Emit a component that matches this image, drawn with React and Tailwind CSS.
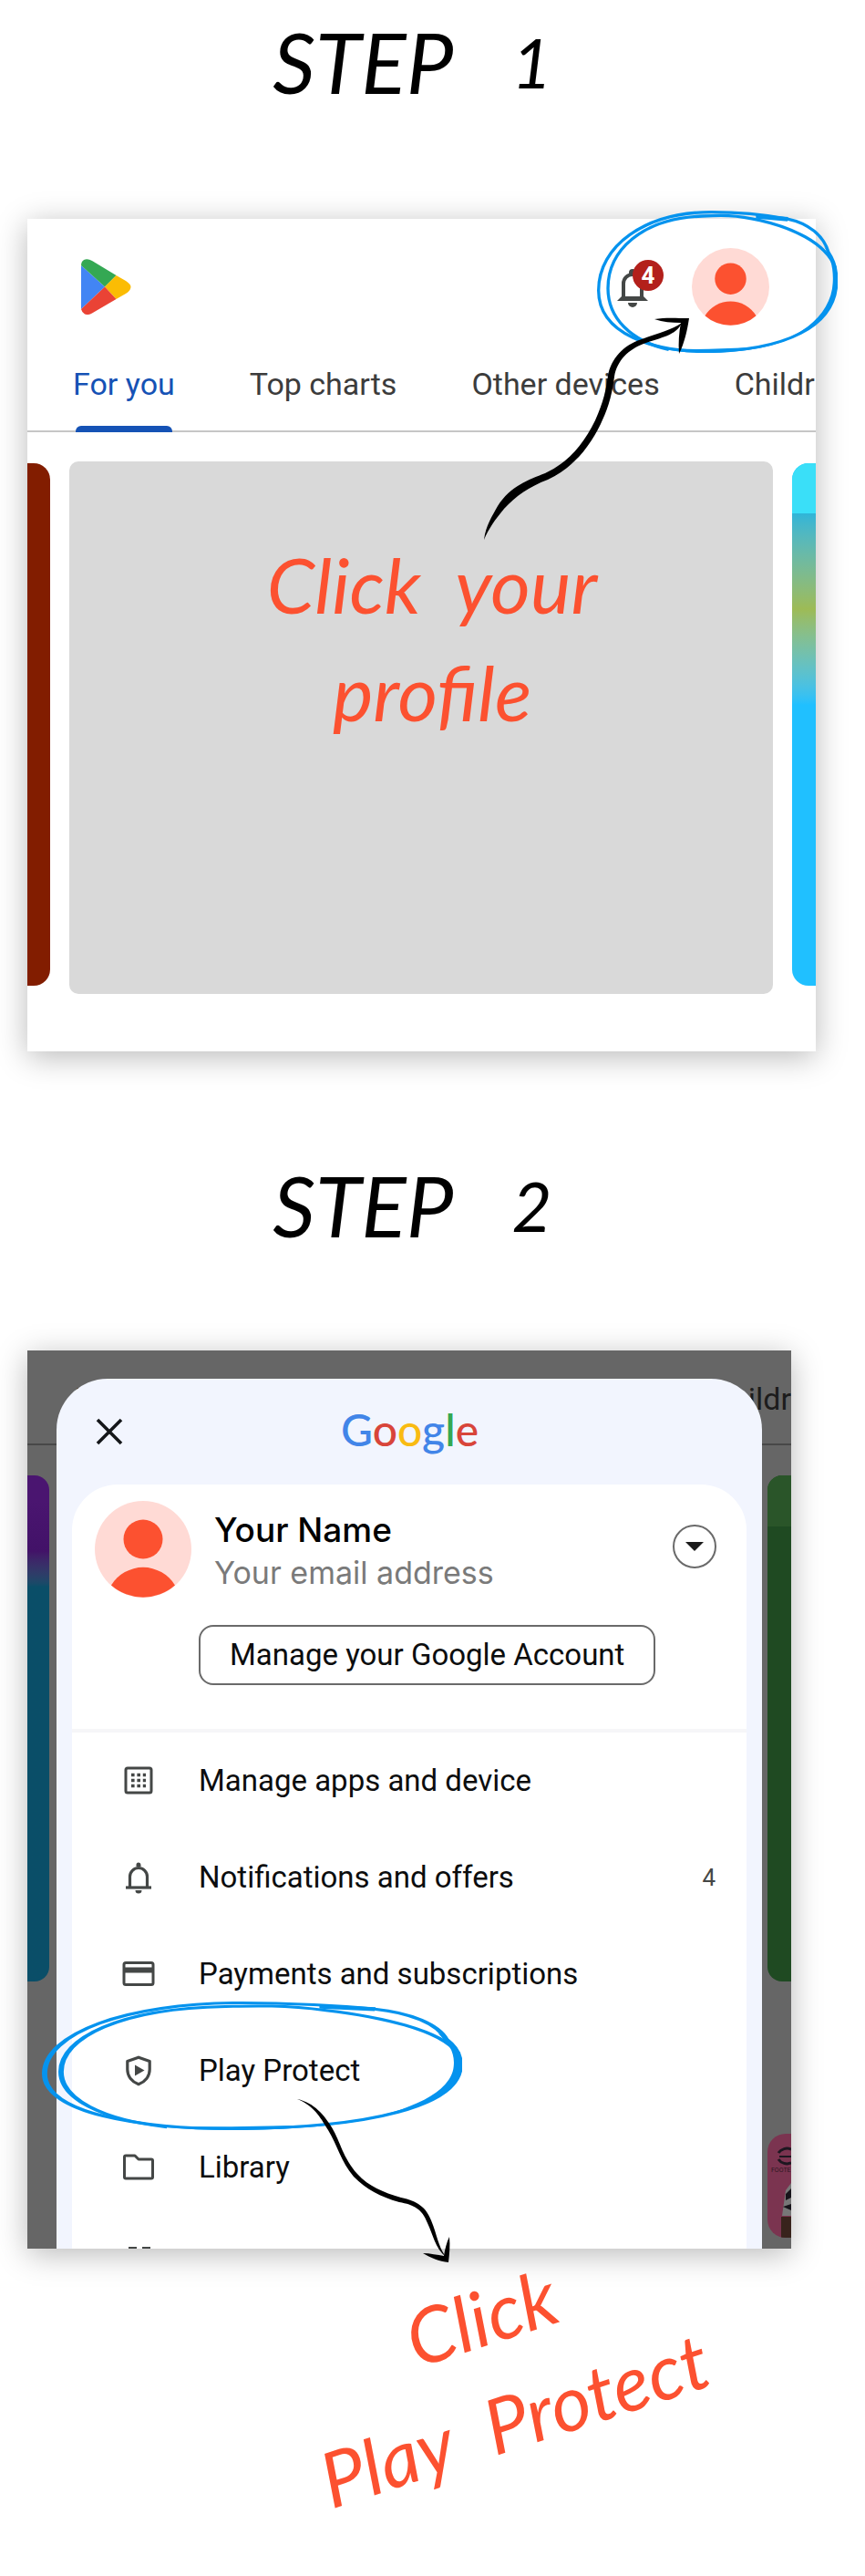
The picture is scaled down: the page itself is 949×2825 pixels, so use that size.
import React, { useState } from 'react';

const TABS = ['For you', 'Top charts', 'Other devices', 'Childr'];

const MENU = [
  { label: 'Manage apps and device', icon: AppsIcon },
  { label: 'Notifications and offers', icon: BellIcon, count: 4 },
  { label: 'Payments and subscriptions', icon: CardIcon },
  { label: 'Play Protect', icon: ShieldIcon },
  { label: 'Library', icon: FolderIcon },
];

function AppsIcon() {
  return (
    <svg viewBox="0 0 36 36" className="h-9 w-9" fill="none" stroke="#444746" strokeWidth="3">
      <rect x="4" y="4" width="28" height="27" rx="2" />
      <path d="M10 11.500h16M10 17.500h16M10 23.500h16" strokeWidth="3.4" strokeDasharray="3.6 2.8" />
    </svg>
  );
}

function BellIcon() {
  return (
    <svg viewBox="0 0 36 36" className="h-9 w-9" fill="none" stroke="#444746" strokeWidth="3.2">
      <path d="M8.500 28V17a9.500 9.500 0 0 1 19 0v11" />
      <path d="M4 29h28" />
      <path d="M15.500 6V4a2.500 2.500 0 0 1 5 0v2z M14.500 32h7a3.500 3.500 0 0 1-7 0z" fill="#444746" stroke="none" />
    </svg>
  );
}

function CardIcon() {
  return (
    <svg viewBox="0 0 36 36" className="h-9 w-9" fill="none" stroke="#444746" strokeWidth="3">
      <rect x="2" y="5.500" width="32" height="24" rx="2" />
      <path d="M2 13.500h32" strokeWidth="6" />
    </svg>
  );
}

function ShieldIcon() {
  return (
    <svg viewBox="0 0 36 36" className="h-9 w-9" fill="none" stroke="#444746" strokeWidth="3.2">
      <path d="M18 3.200 30.200 7.500v9c0 7.500-5 13.500-12.200 16.200C10.800 30 5.800 24 5.800 16.500v-9z" strokeLinejoin="round" />
      <path d="M14 11.500v12l10.500-6z" fill="#444746" stroke="none" />
    </svg>
  );
}

function FolderIcon() {
  return (
    <svg viewBox="0 0 36 36" className="h-9 w-9" fill="none" stroke="#444746" strokeWidth="3" strokeLinejoin="round">
      <path d="M2.500 6.500a1.500 1.500 0 0 1 1.500-1.500h10l4 4h14a1.500 1.500 0 0 1 1.500 1.500v18a1.500 1.500 0 0 1-1.500 1.500H4a1.500 1.500 0 0 1-1.500-1.500z" />
    </svg>
  );
}

function PlayLogo() {
  return (
    <svg viewBox="0 0 55 61" className="h-[61px] w-[55px]">
      <path d="M0 7 26 30.500 0 55z" fill="#4285f4" />
      <path d="M0 7Q0 3 3 1Q7-1 12 2L38.500 18 26 30.500z" fill="#34a853" />
      <path d="M38.500 18 49 24Q55 28 54.500 31Q54 35 49 38L38.500 44 26 30.500z" fill="#fbbc04" />
      <path d="M0 55Q1 59 4 60.500Q8 62 12 59.500L38.500 44 26 30.500z" fill="#ea4335" />
    </svg>
  );
}

function Avatar({ className }) {
  return (
    <svg viewBox="0 0 106 106" className={className}>
      <circle cx="53" cy="53" r="53" fill="#ffdad5" />
      <circle cx="53" cy="42" r="21.5" fill="#fc5130" />
      <path d="M18 92.500A41 41 0 0 1 88 92.500A53 53 0 0 1 18 92.500z" fill="#fc5130" />
    </svg>
  );
}

// Marker loop drawn round the thing to tap, stretched to whatever it circles
function MarkerLoop({ className }) {
  return (
    <svg viewBox="104 63 792 467" preserveAspectRatio="none" className={className} fill="none" stroke="#0593ee" strokeWidth="10">
      <path d="M731 90C800 104 850 145 866 200C890 235 894 270 892 305C884 440 730 524 460 525C290 525 109 470 109 325C109 180 260 68 480 68C570 68 670 79 731 90" />
      <path d="M888 250C855 165 740 118 640 95C560 76 510 78 450 81C250 88 140 195 140 318C140 415 215 492 340 519" />
      <path d="M627 75 733 84 731 98 627 89z" fill="#0593ee" stroke="none" />
      <path d="M850 178C885 215 896 260 896 300C890 430 740 530 460 530C400 530 350 524 300 512C400 522 500 517 600 513C760 500 875 410 880 300C883 250 872 215 850 178z" fill="#0593ee" stroke="none" />
    </svg>
  );
}

function StepHeading({ number, className }) {
  return (
    <h2 className={`flex items-center justify-center gap-16 pr-11 font-[Lato] text-[92px] leading-[120px] text-black italic ${className}`}>
      <span>STEP</span>
      <span className="text-[76px]">{number}</span>
    </h2>
  );
}

function GoogleWordmark() {
  return (
    <span className="font-[Lato] text-[48px] leading-[56px] font-medium" aria-label="Google">
      <span className="text-[#4285e8]">G</span>
      <span className="text-[#d8453a]">o</span>
      <span className="text-[#f9bb12]">o</span>
      <span className="text-[#4285e8]">g</span>
      <span className="text-[#34a853]">l</span>
      <span className="text-[#d8453a]">e</span>
    </span>
  );
}

function StoreCard() {
  const [tab, setTab] = useState('For you');

  return (
    <div className="relative mr-[54px] ml-[30px]">
      <div className="overflow-hidden bg-white pt-8 pb-[63px] shadow-[0_6px_32px_rgba(0,0,0,0.28)]">
        <header className="flex items-center pr-[51px] pl-[59px]">
          <PlayLogo />
          <button type="button" aria-label="Notifications" className="relative mr-[47px] ml-auto">
            <svg viewBox="0 0 36 44" className="h-11 w-9" fill="none" stroke="#444746" strokeWidth="4">
              <path d="M8 35V18a10 10 0 0 1 20 0v17" />
              <path d="M1 37 6 32H30L35 37z" fill="#444746" stroke="none" />
              <path d="M14 6a4 4 0 0 1 8 0v4h-8z M13 39h10a5 5 0 0 1-10 0z" fill="#444746" stroke="none" />
            </svg>
            <span className="absolute -top-2 left-[18px] flex h-[34px] w-[34px] items-center justify-center rounded-full bg-[#b3201b] font-[Roboto] text-[26px] leading-none font-bold text-white">
              4
            </span>
          </button>
          <button type="button" aria-label="Profile">
            <Avatar className="h-[85px] w-[85px]" />
          </button>
        </header>

        <nav className="mt-[11px] flex h-[106px] gap-[82px] border-b-2 border-[#c6c6c6] pt-0.5 pl-[50px]">
          {TABS.map((name) => (
            <button
              key={name}
              type="button"
              onClick={() => setTab(name)}
              className={`relative shrink-0 font-[Roboto] text-[34px] whitespace-nowrap ${
                tab === name ? 'text-[#1552b5]' : 'text-[#3c3c3c]'
              }`}
            >
              {name}
              {tab === name && <span className="absolute inset-x-[3px] -bottom-[2px] h-[7px] rounded-t-md bg-[#1552b5]" />}
            </button>
          ))}
        </nav>

        <div className="mt-8 flex items-stretch">
          <div className="mt-0.5 mb-[9px] w-[25px] rounded-r-[18px] bg-[#821d00]" />
          <div className="mx-[21px] flex-1 rounded-[10px] bg-[#d9d9d9] pt-[76px] pb-[272px] pl-6">
            <p className="text-center font-[Lato] text-[84px] leading-[118px] text-[#fc5130] italic">
              <span className="mr-5">Click</span> your
              <br />
              profile
            </p>
          </div>
          <div className="mt-0.5 mb-[9px] w-[26px] overflow-hidden rounded-l-[18px] bg-[#20c0ff]">
            <div className="h-[55px] bg-[#3adff8]" />
            <div className="h-[210px] bg-linear-to-b from-[#2fb5d8] via-[#9dbb55] to-[#20c0ff]" />
          </div>
        </div>
      </div>

      <MarkerLoop className="pointer-events-none absolute -top-[9px] -right-6 h-[156px] w-[264px]" />
      <svg viewBox="525 345 235 250" className="pointer-events-none absolute top-[105px] right-[135px] h-[250px] w-[235px]">
        <path d="M531 592C533 576 540 566 546 555C560 533 580 526 598 519C622 508 640 488 653 461C662 441 665 427 667 412C670 394 684 378 704 372C725 364 737 362 748 354C742 368 725 370 706 377C690 383 677 395 674 413C671 438 665 452 659 465C646 492 627 514 601 526C580 534 566 544 553 558C543 570 536 580 531 592z" />
        <path d="M718 350C730 348 742 349 756 349C754 362 751 376 745 388C744 376 745 364 747 354C737 354 727 353 718 350z" />
      </svg>
    </div>
  );
}

function AccountSheet() {
  return (
    <section className="z-10 mx-8 mt-[31px] rounded-t-[56px] bg-[#f2f5fe] px-[17px] [grid-area:1/1]">
      <div className="grid h-[116px] grid-cols-3 items-center pr-6 pl-[25px]">
        <button type="button" aria-label="Close" className="w-8">
          <svg viewBox="0 0 32 32" className="h-8 w-8" stroke="#15171a" strokeWidth="3.6">
            <path d="M3 3 29 29M29 3 3 29" />
          </svg>
        </button>
        <div className="pb-1 text-center">
          <GoogleWordmark />
        </div>
      </div>

      <div className="rounded-t-[50px] bg-white">
        <div className="flex items-start pt-[18px] pr-[33px] pl-[25px]">
          <Avatar className="h-[106px] w-[106px] shrink-0" />
          <div className="mt-2 ml-[25px] flex-1 font-[Inter]">
            <p className="text-[37px] leading-[48px] font-medium text-black">Your Name</p>
            <p className="text-[34px] leading-[46px] text-[#7a7a7a]">Your email address</p>
          </div>
          <button
            type="button"
            aria-label="Switch account"
            className="mt-[26px] flex h-12 w-12 items-center justify-center rounded-full border-2 border-[#6a6a6a]"
          >
            <svg viewBox="0 0 20 10" className="h-[10px] w-5" fill="#1a1a1a">
              <path d="M0 0h20L10 10z" />
            </svg>
          </button>
        </div>
        <button
          type="button"
          className="mt-[30px] ml-[139px] h-[66px] rounded-[16px] border-2 border-[#6a6a6a] px-8 font-[Roboto] text-[33px] whitespace-nowrap text-[#0c0d0e]"
        >
          Manage your Google Account
        </button>
        <div className="mt-12 h-1 bg-[#f6f6f8]" />

        <ul className="font-[Roboto] text-[33px] text-[#0c0d0e]">
          {MENU.map(({ label, icon: Icon, count }) => (
            <li key={label}>
              <a href="#" className="flex h-[106px] items-center pr-[34px] pl-[55px]">
                <Icon />
                <span className="ml-12 whitespace-nowrap">{label}</span>
                {count && <span className="ml-auto text-[26px] text-[#444746]">{count}</span>}
              </a>
            </li>
          ))}
        </ul>
        <div className="flex h-9 items-end gap-[6px] pl-[62px]">
          <div className="h-0.5 w-[9px] bg-[#444746]" />
          <div className="h-0.5 w-[9px] bg-[#444746]" />
        </div>
      </div>
    </section>
  );
}

function ProtectCard() {
  return (
    <div className="relative mr-[81px] ml-[30px]">
      <div className="grid overflow-hidden bg-[#666666] shadow-[0_6px_32px_rgba(0,0,0,0.28)]">
        {/* dimmed store page behind the sheet */}
        <div className="[grid-area:1/1]">
          <div className="flex h-[104px] items-center justify-between overflow-hidden border-b-2 border-[#484848] pt-1 pl-[52px] font-[Roboto] text-[34px] text-[#1c1c1c]">
            <span>For you</span>
            <span>Childr</span>
          </div>
          <div className="mt-[33px] flex h-[555px] justify-between">
            <div className="w-6 rounded-r-[16px] bg-linear-to-b from-[#4a1570] from-5% via-[#421268] via-15% to-[#0a4e68] to-22%" />
            <div className="w-[26px] overflow-hidden rounded-l-[16px] bg-[#1f4a22]">
              <div className="h-14 bg-[#2a5529]" />
            </div>
          </div>
          <div className="mt-[167px] ml-auto h-[114px] w-[26px] overflow-hidden rounded-l-[20px] bg-[#7b3450]">
            <svg viewBox="0 0 26 114" className="h-full w-full">
              <path d="M12 21A11 10 0 0 1 26 17M12 28A11 10 0 0 0 26 32" stroke="#1d1720" strokeWidth="3" fill="none" />
              <path d="M13 25h13" stroke="#1d1720" strokeWidth="2" />
              <text x="4" y="42" fontFamily="Roboto" fontSize="7" fill="#2b1722">FOOTE</text>
              <path d="M20 62 26 54V90H16L18 76z" fill="#777" />
              <path d="M20 66 26 60V70L20 73zM17 80 26 77V84z" fill="#17141a" />
              <path d="M15 91H26V114H15z" fill="#38231c" />
            </svg>
          </div>
        </div>
        <AccountSheet />
      </div>

      <MarkerLoop className="pointer-events-none absolute top-[714px] left-4 z-10 h-[141px] w-[461px]" />
      <svg viewBox="320 2295 180 190" className="pointer-events-none absolute top-[814px] left-[290px] z-10 h-[190px] w-[180px]">
        <path d="M326 2302C345 2306 356 2320 364 2333C374 2350 376 2366 392 2384C405 2398 420 2404 440 2410C458 2414 467 2420 473 2435C480 2452 480 2462 489 2475C477 2465 475 2450 469 2438C463 2422 454 2418 438 2415C417 2409 402 2401 388 2387C374 2371 370 2352 360 2336C351 2321 344 2309 326 2302z" />
        <path d="M464 2471C472 2471 480 2473 487 2474C488 2467 490 2459 493 2453C494 2463 493 2472 492 2481C482 2480 472 2476 464 2471z" />
      </svg>
    </div>
  );
}

export default function App() {
  return (
    <main className="overflow-hidden bg-white pt-2">
      <StepHeading number={1} className="mb-28" />
      <StoreCard />
      <StepHeading number={2} className="mt-[109px] mb-[99px]" />
      <ProtectCard />
      <p className="mt-9 mb-[86px] -rotate-18 pl-[150px] text-center font-[Lato] text-[84px] leading-[118px] text-[#fc5130] italic">
        Click
        <br />
        <span className="mr-5">Play</span> Protect
      </p>
    </main>
  );
}
